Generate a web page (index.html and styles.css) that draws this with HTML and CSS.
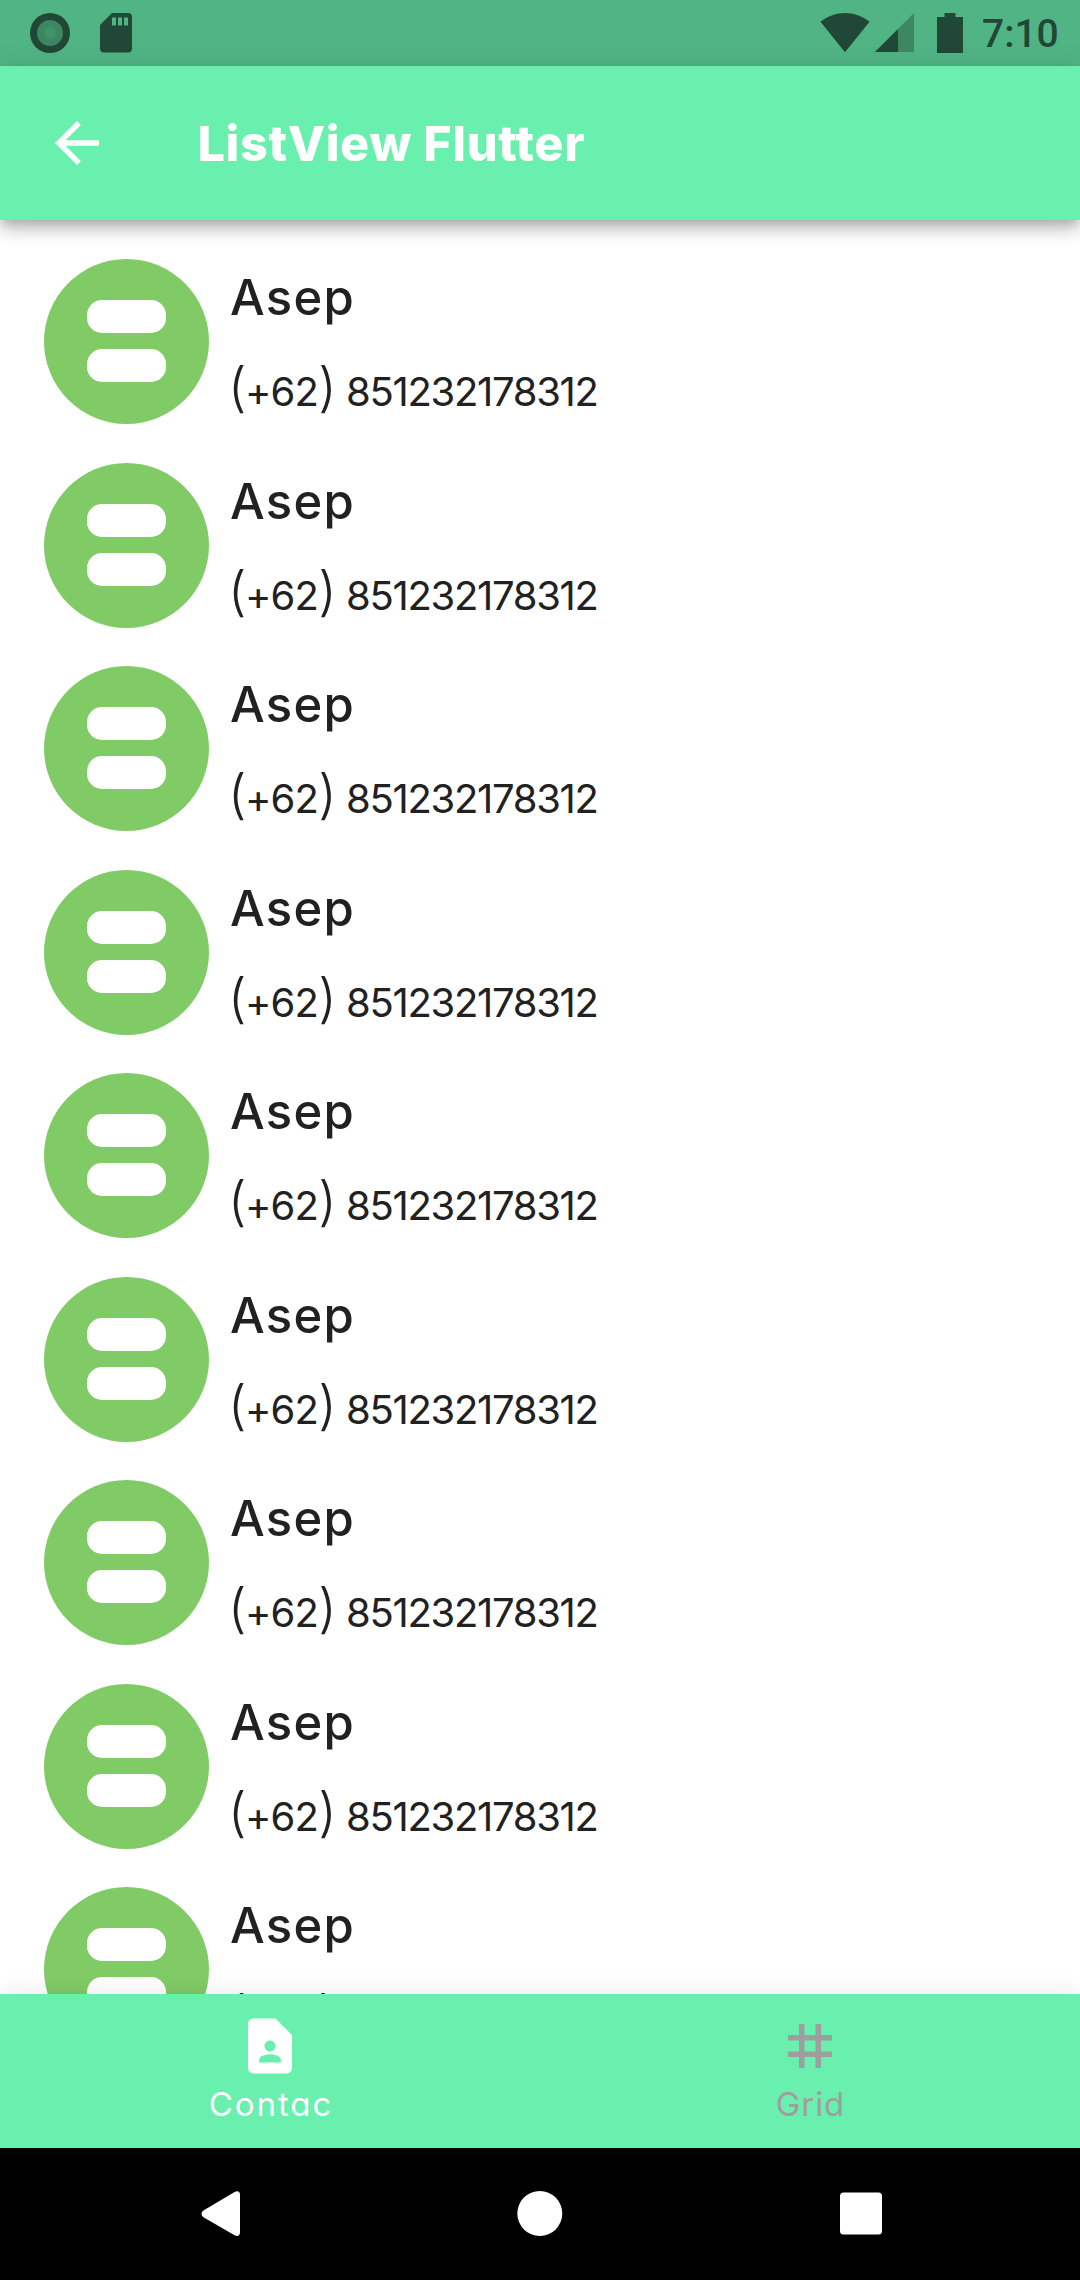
FILE: index.html
```html
<!DOCTYPE html>
<html lang="en">
<head>
<meta charset="utf-8">
<title>ListView Flutter</title>
<link rel="stylesheet" href="styles.css">
</head>
<body>
<div class="screen">
  <div class="status-bar">
    <svg class="status-record" width="40" height="40" viewBox="0 0 40 40"><circle cx="20" cy="20" r="20" fill="#214736"/><circle cx="20" cy="20" r="13" fill="#3c8661"/><circle cx="20" cy="20" r="6" fill="#40926a"/></svg>
    <svg class="status-sd" width="32" height="40" viewBox="0 0 32 40"><path d="M12 0H28Q32 0 32 4V35.500Q32 39.500 28 39.500H4Q0 39.500 0 35.500V12Z" fill="#214736"/><path d="M12 4.500h4v8h-4zM18 4.500h4v8h-4zM24 4.500h4v8h-4z" fill="#50b484"/></svg>
    <div class="status-right">
      <svg class="status-wifi" width="50" height="40" viewBox="0 0 50 40"><path d="M0.500 8.700C15 -2.900 35 -2.900 49.500 8.700L25 39.200Z" fill="#214736"/></svg>
      <svg class="status-signal" width="39" height="40" viewBox="0 0 39 40"><path d="M39 0V39H0Z" fill="#3d8862"/><path d="M23 16V39H0Z" fill="#214736"/></svg>
      <svg class="status-battery" width="26" height="40" viewBox="0 0 26 40"><path d="M7.500 0H18.500V4H26V40H0V4H7.500Z" fill="#214736"/></svg>
      <span class="clock">7:10</span>
    </div>
  </div>
  <header class="app-bar">
    <svg class="back" width="66" height="66" viewBox="0 0 24 24"><path d="M20 11H7.830l5.590-5.590L12 4l-8 8 8 8 1.410-1.410L7.830 13H20z" fill="#fff"/></svg>
    <h1 class="title">ListView Flutter</h1>
  </header>
  <main class="list">
    <div class="contact"><div class="avatar"><i></i><i></i></div><div class="info"><div class="name">Asep</div><div class="phone"><span class="code"><b>(</b>+62<b>)</b></span> <span class="number">851232178312</span></div></div></div>
    <div class="contact"><div class="avatar"><i></i><i></i></div><div class="info"><div class="name">Asep</div><div class="phone"><span class="code"><b>(</b>+62<b>)</b></span> <span class="number">851232178312</span></div></div></div>
    <div class="contact"><div class="avatar"><i></i><i></i></div><div class="info"><div class="name">Asep</div><div class="phone"><span class="code"><b>(</b>+62<b>)</b></span> <span class="number">851232178312</span></div></div></div>
    <div class="contact"><div class="avatar"><i></i><i></i></div><div class="info"><div class="name">Asep</div><div class="phone"><span class="code"><b>(</b>+62<b>)</b></span> <span class="number">851232178312</span></div></div></div>
    <div class="contact"><div class="avatar"><i></i><i></i></div><div class="info"><div class="name">Asep</div><div class="phone"><span class="code"><b>(</b>+62<b>)</b></span> <span class="number">851232178312</span></div></div></div>
    <div class="contact"><div class="avatar"><i></i><i></i></div><div class="info"><div class="name">Asep</div><div class="phone"><span class="code"><b>(</b>+62<b>)</b></span> <span class="number">851232178312</span></div></div></div>
    <div class="contact"><div class="avatar"><i></i><i></i></div><div class="info"><div class="name">Asep</div><div class="phone"><span class="code"><b>(</b>+62<b>)</b></span> <span class="number">851232178312</span></div></div></div>
    <div class="contact"><div class="avatar"><i></i><i></i></div><div class="info"><div class="name">Asep</div><div class="phone"><span class="code"><b>(</b>+62<b>)</b></span> <span class="number">851232178312</span></div></div></div>
    <div class="contact"><div class="avatar"><i></i><i></i></div><div class="info"><div class="name">Asep</div><div class="phone"><span class="code"><b>(</b>+62<b>)</b></span> <span class="number">851232178312</span></div></div></div>
  </main>
  <nav class="tabs">
    <div class="tab tab-active">
      <svg width="66" height="66" viewBox="0 0 24 24"><path fill="currentColor" fill-rule="evenodd" d="M14 2H6C4.900 2 4 2.900 4 4v16c0 1.100.890 2 1.990 2H18c1.100 0 2-.900 2-2V8zM12 10c1.100 0 2 .900 2 2s-.900 2-2 2-2-.900-2-2 .900-2 2-2zM16 18H8v-.570c0-.810.480-1.530 1.220-1.850C10.070 15.210 11.010 15 12 15s1.930.210 2.780.580C15.520 15.900 16 16.620 16 17.430z"/></svg>
      <span class="label label-contac">Contac</span>
    </div>
    <div class="tab">
      <svg width="66" height="66" viewBox="0 0 24 24"><path fill="currentColor" fill-rule="evenodd" d="M20 10V8h-4V4h-2v4h-4V4H8v4H4v2h4v4H4v2h4v4h2v-4h4v4h2v-4h4v-2h-4v-4zM14 14h-4v-4h4z"/></svg>
      <span class="label label-grid">Grid</span>
    </div>
  </nav>
  <div class="system-nav">
    <svg width="40" height="46" viewBox="0 0 40 46"><path d="M34 .700Q39 -1 39 4V41Q39 46 34 44.600L2 26Q-1 22.700 2 19.700Z" fill="#fff"/></svg>
    <svg width="48" height="46" viewBox="0 0 48 46"><circle cx="22.800" cy="22.500" r="22.500" fill="#fff"/></svg>
    <svg width="42" height="46" viewBox="0 0 42 46"><rect y="1.500" width="42" height="42" rx="3.500" fill="#fff"/></svg>
  </div>
</div>
</body>
</html>
```
FILE: styles.css
```css
* { box-sizing: border-box; }
body { margin: 0; background: #fff; }
svg { display: block; flex: none; }

.screen {
  width: 1080px;
  height: 2280px;
  display: flex;
  flex-direction: column;
  overflow: hidden;
  background: #fff;
  color: #212121;
  font-family: Inter, "Open Sans", sans-serif;
  font-feature-settings: "cv11" 1;
}

.status-bar {
  height: 66px;
  flex: none;
  display: flex;
  padding: 13px 23px 0 30px;
  background: #50b484;
}
.status-sd { margin-left: 30px; }
.status-right { margin-left: auto; display: flex; }
.status-signal { margin-left: 5px; }
.status-battery { margin-left: 23px; }
.clock {
  width: 75px;
  margin-left: 19px;
  font: 500 39px/43px Roboto, sans-serif;
  color: #214736;
  white-space: nowrap;
}

.app-bar {
  height: 154px;
  flex: none;
  display: flex;
  align-items: center;
  padding-left: 44px;
  background: #69f0ae;
  box-shadow: 0 5px 11px -3px rgba(0, 0, 0, .2), 0 11px 14px rgba(0, 0, 0, .14), 0 3px 27px rgba(0, 0, 0, .12);
  z-index: 1;
}
.title {
  margin: 0 0 0 87.500px;
  padding-top: 1px;
  color: #fff;
  font-size: 48.500px;
  line-height: 60px;
  font-weight: 800;
  letter-spacing: .7px;
  white-space: nowrap;
}

.list {
  height: 1774px;
  flex: none;
  padding-top: 39px;
  overflow: hidden;
}
.contact {
  height: 203.5px;
  display: flex;
  padding-left: 44px;
}
.avatar {
  width: 165px;
  height: 165px;
  flex: none;
  display: flex;
  flex-direction: column;
  align-items: center;
  gap: 16px;
  padding-top: 41px;
  border-radius: 50%;
  background: #81cb67;
}
.avatar i {
  width: 79px;
  height: 33px;
  border-radius: 15px;
  background: #fff;
}
.info { margin-left: 21px; white-space: nowrap; }
.name {
  font-size: 49px;
  line-height: 77px;
  font-weight: 500;
  letter-spacing: 1.3px;
}
.phone {
  display: flex;
  margin-top: 25px;
  font-size: 40px;
  line-height: 62px;
  letter-spacing: -1.3px;
}
.code {
  width: 118px;
  height: 62px;
  margin-left: -2px;
  letter-spacing: -.8px;
}
.code b {
  font-size: 53px;
  line-height: 0;
  font-weight: 300;
  letter-spacing: -1.5px;
}

.tabs {
  height: 154px;
  flex: none;
  display: flex;
  background: #69f0ae;
  box-shadow: 0 0 22px rgba(0, 0, 0, .1);
  z-index: 1;
}
.tab {
  flex: 1;
  display: flex;
  flex-direction: column;
  align-items: center;
  padding-top: 19px;
  color: #9e9e9e;
}
.tab-active { color: #fff; }
.label {
  font-size: 33px;
  line-height: 50px;
}
.label-contac {
  margin-right: -2px;
  letter-spacing: 1.9px;
}
.label-grid {
  margin-right: -1px;
  letter-spacing: .9px;
}

.system-nav {
  height: 132px;
  flex: none;
  display: flex;
  justify-content: space-between;
  padding: 43px 198px 0 201px;
  background: #000;
}
```
